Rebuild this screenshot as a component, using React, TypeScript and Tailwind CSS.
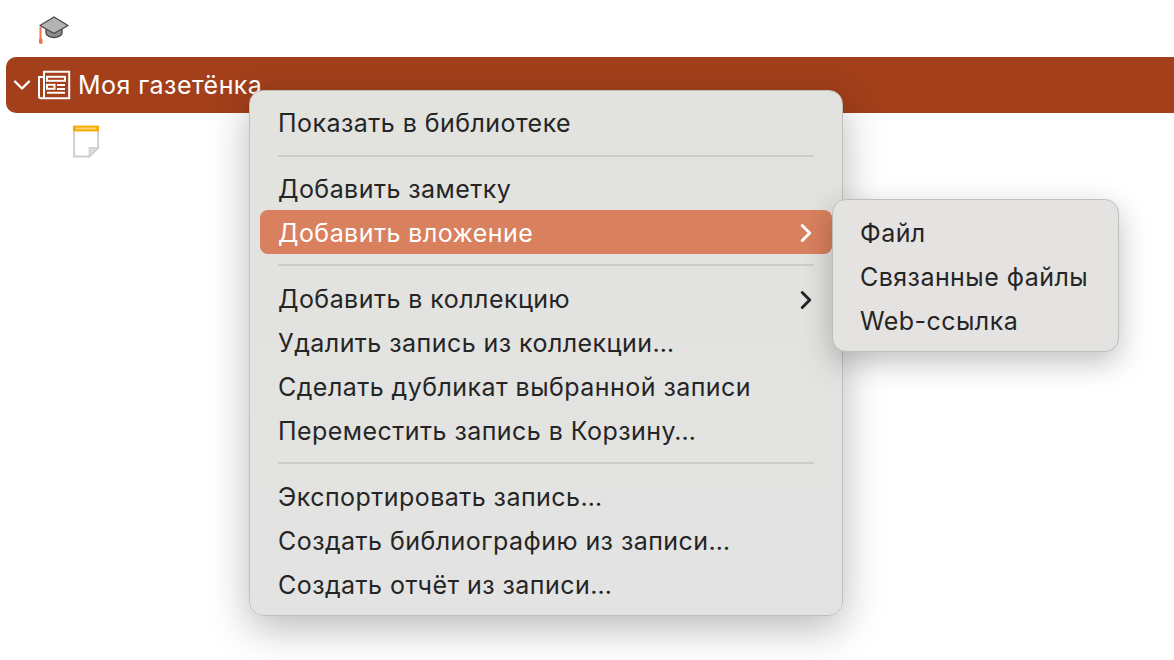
import React from 'react'
import { ChevronDown, ChevronRight } from 'lucide-react'

const CapIcon = () => (
	<svg width="34" height="34" viewBox="0 0 34 34" className="block">
		<path d="M9 15v7c0 2.500 4 4.500 8 4.500s8-2 8-4.500v-7z" fill="#8e8e8e" stroke="#4a4a4a" strokeWidth="1.400" />
		<path d="M17 6L31 14.500L17 22.500L3 14.500z" fill="#b4b4b4" stroke="#4a4a4a" strokeWidth="1.400" strokeLinejoin="round" />
		<path d="M3.500 16v13" stroke="#f2704a" strokeWidth="2" />
		<rect x="2" y="27" width="3.500" height="6" rx="1.700" fill="#f2704a" />
	</svg>
)

const PaperIcon = () => (
	<svg width="34" height="34" viewBox="0 0 34 34" fill="none" stroke="#fff" strokeWidth="2" className="block">
		<path d="M7 9H2v19.500C2 29.500 3 30.200 4 30.200h28.200V3.800H7v26" />
		<rect x="10" y="8.800" width="18" height="4" />
		<rect x="10" y="16.800" width="7.500" height="4" />
		<path d="M20 17h8M20 21h8M10 24.800h18" />
	</svg>
)

const NoteIcon = () => (
	<svg width="27" height="34" viewBox="0 0 28 34" fill="none" className="block">
		<path d="M1 4v28h16l9-9V4z" fill="#fff" stroke="#cfcfcf" strokeWidth="2" />
		<path d="M17 32v-9h9z" fill="#dedede" stroke="#cfcfcf" strokeWidth="1.500" />
		<rect x="0" y="0" width="27" height="6" fill="#f5ab00" />
		<rect x="3" y="2" width="21" height="2" fill="#ffd678" />
	</svg>
)

const Row = ({ label, active, arrow }: { label: string; active?: boolean; arrow?: boolean }) => (
	<div
		className={`h-[44px] mx-[10px] pl-[18px] pr-[11px] rounded-[8px] flex items-center justify-between ${
			active ? 'bg-[#d9805f] text-white -mt-[1px] mb-[1px] pt-[4px]' : 'text-[#252525] pt-[2px]'
		}`}
	>
		<span>{label}</span>
		{arrow && <ChevronRight size={30} strokeWidth={2.400} className={active ? 'text-white -mt-[2px]' : 'text-[#252525]'} />}
	</div>
)

export default function App() {
	return (
		<div className="relative w-[1174px] h-[660px] overflow-hidden bg-white font-['Inter',sans-serif] text-[25px] tracking-[0.45px]">
			<div className="h-[57px] pl-[37px] pt-[11px]">
				<CapIcon />
			</div>
			<div className="h-[56px] ml-[6px] w-[1168px] rounded-l-[10px] bg-[#a33f1b] text-white flex items-center pl-[2px]">
				<ChevronDown size={28} strokeWidth={2} />
				<span className="ml-[1px]">
					<PaperIcon />
				</span>
				<span className="ml-[7px] pt-[2px]">Моя газетёнка</span>
			</div>
			<div className="pl-[73px] pt-[12px]">
				<NoteIcon />
			</div>

			<div className="absolute left-[249px] top-[90px] w-[594px] h-[526px] pt-[10px] rounded-[14px] bg-gradient-to-b from-[#e2e2de] to-[#e3e3e3] border border-[#bfbfbd] shadow-[0_12px_40px_rgba(0,0,0,0.28)]">
				<Row label="Показать в библиотеке" />
				<div className="h-[2px] my-[10px] mx-[28px] bg-[#cdccc9]" />
				<Row label="Добавить заметку" />
				<Row label="Добавить вложение" active arrow />
				<div className="h-[2px] mt-[10px] mb-[11px] mx-[28px] bg-[#cdccc9]" />
				<Row label="Добавить в коллекцию" arrow />
				<Row label="Удалить запись из коллекции…" />
				<Row label="Сделать дубликат выбранной записи" />
				<Row label="Переместить запись в Корзину…" />
				<div className="h-[2px] mt-[9px] mb-[11px] mx-[28px] bg-[#cdccc9]" />
				<Row label="Экспортировать запись…" />
				<Row label="Создать библиографию из записи…" />
				<Row label="Создать отчёт из записи…" />
			</div>

			<div className="absolute left-[832px] top-[199px] w-[287px] h-[153px] pt-[12px] rounded-[14px] bg-[#e4e3e2] border border-[#bfbfbd] shadow-[0_10px_30px_rgba(0,0,0,0.25)] text-[#252525]">
				<div className="h-[44px] pl-[27px] flex items-center">Файл</div>
				<div className="h-[44px] pl-[27px] flex items-center">Связанные файлы</div>
				<div className="h-[44px] pl-[27px] flex items-center">Web-ссылка</div>
			</div>
		</div>
	)
}
